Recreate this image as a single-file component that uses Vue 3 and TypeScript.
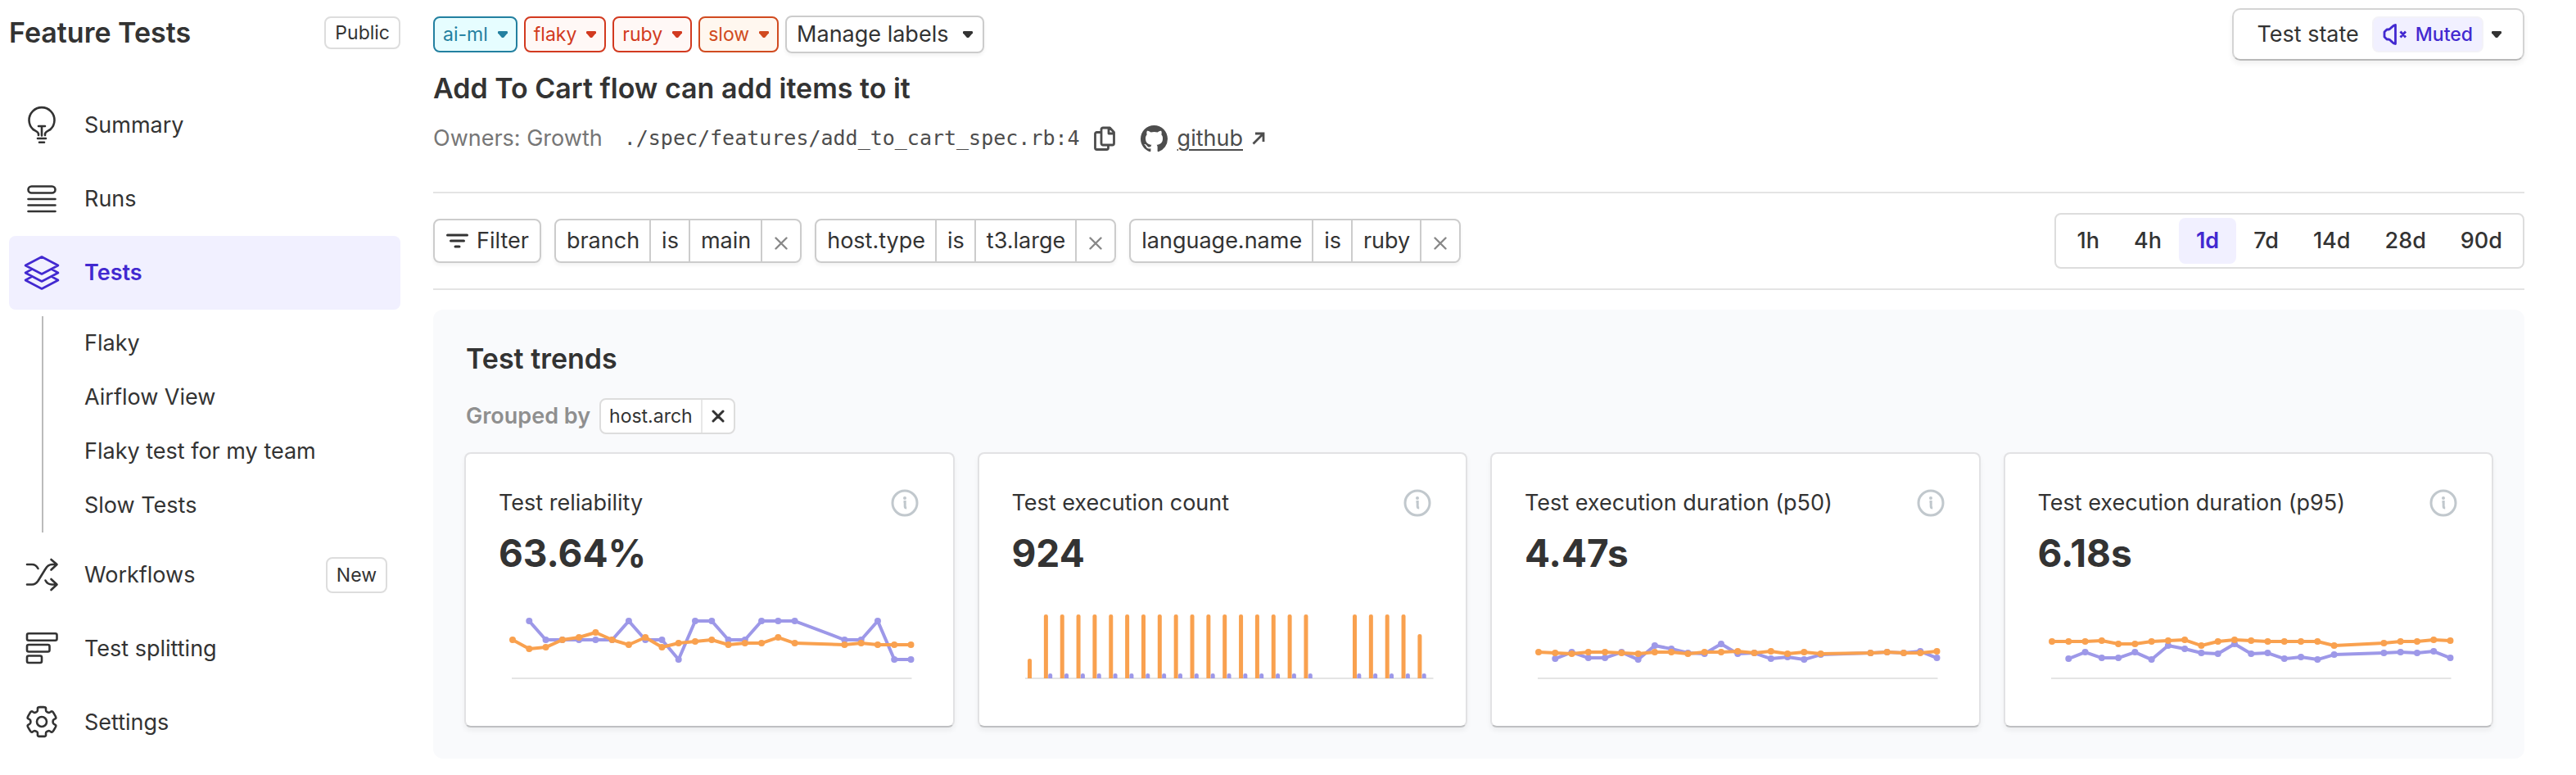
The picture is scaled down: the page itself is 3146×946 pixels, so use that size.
<script setup lang="ts">
import { ref } from 'vue'

type Point = [slot: number, y: number]
interface Series { tone: 'violet' | 'orange'; points: Point[] }
interface Metric { title: string; value: string; series?: Series[]; bars?: boolean }

const subItems = ['Flaky', 'Airflow View', 'Flaky test for my team', 'Slow Tests']

const labels = [
  { name: 'ai-ml', tone: 'teal' },
  { name: 'flaky', tone: 'red' },
  { name: 'ruby', tone: 'red' },
  { name: 'slow', tone: 'amber' },
]

const filters = [
  { key: 'branch', op: 'is', value: 'main' },
  { key: 'host.type', op: 'is', value: 't3.large' },
  { key: 'language.name', op: 'is', value: 'ruby' },
]

const ranges = ['1h', '4h', '1d', '7d', '14d', '28d', '90d']
const activeRange = ref('1d')

// Hourly slots; 18 and 19 hold no data.
const slots = [0, 1, 2, 3, 4, 5, 6, 7, 8, 9, 10, 11, 12, 13, 14, 15, 16, 17, 20, 21, 22, 23, 24]
const plot = (ys: number[], from = 0): Point[] => ys.map((y, i) => [slots[i + from], y])

const slowDurations = plot(
  [64, 56, 63, 63, 56, 65, 48, 52, 57, 58, 46, 58, 57, 64, 62, 65, 59, 57, 56, 57, 55, 63], 1)

const metrics: Metric[] = [
  {
    title: 'Test reliability',
    value: '63.64%',
    series: [
      { tone: 'violet', points: plot([18, 41, 41, 41, 41, 41, 18, 41, 41, 65, 18, 18, 41, 41, 18, 18, 18, 41, 41, 18, 65, 65], 1) },
      { tone: 'orange', points: plot([41, 52, 50, 41, 38, 32, 41, 47, 38, 50, 45, 43, 41, 47, 45, 45, 38, 45, 47, 45, 47, 47, 47]) },
    ],
  },
  { title: 'Test execution count', value: '924', bars: true },
  {
    title: 'Test execution duration (p50)',
    value: '4.47s',
    series: [
      { tone: 'violet', points: slowDurations },
      { tone: 'orange', points: plot([56, 57, 58, 56, 56, 57, 58, 56, 56, 58, 56, 56, 55, 57, 55, 58, 56, 58, 57, 56, 57, 57, 55]) },
    ],
  },
  {
    title: 'Test execution duration (p95)',
    value: '6.18s',
    series: [
      { tone: 'violet', points: slowDurations },
      { tone: 'orange', points: plot([43, 43, 43, 42, 46, 46, 43, 42, 41, 48, 43, 41, 42, 43, 43, 43, 43, 48, 45, 43, 43, 41, 42]) },
    ],
  },
]

const px = (slot: number) => 17 + slot * 20.25
const toPath = (points: Point[]) => points.map(([s, y]) => `${px(s)},${y}`).join(' ')

const barX = (slot: number) => 19 + slot * 19.83
const barTop = (slot: number) => (slot === 0 ? 64 : slot === 24 ? 34 : 10)

// Six-toothed gear outline with softened corners.
function gearPath(cx: number, cy: number): string {
  const pts: [number, number][] = []
  for (let t = 0; t < 6; t++) {
    const corners: [number, number][] = [[-21, 13.8], [-16, 18.6], [16, 18.6], [21, 13.8]]
    for (const [deg, r] of corners) {
      const a = ((t * 60 + deg - 90) * Math.PI) / 180
      pts.push([cx + r * Math.cos(a), cy + r * Math.sin(a)])
    }
  }
  const lerp = (p: number[], q: number[], k: number) =>
    `${(p[0] + (q[0] - p[0]) * k).toFixed(2)} ${(p[1] + (q[1] - p[1]) * k).toFixed(2)}`
  return pts.map((p, i) => {
    const prev = pts[(i + pts.length - 1) % pts.length]
    const next = pts[(i + 1) % pts.length]
    return `${i ? 'L' : 'M'}${lerp(p, prev, 0.3)}Q${p[0].toFixed(2)} ${p[1].toFixed(2)} ${lerp(p, next, 0.3)}`
  }).join('') + 'Z'
}
const gear = gearPath(24, 23)
</script>

<template>
  <div class="page">
    <aside class="sidebar">
      <header class="suite">
        <h2>Feature Tests</h2>
        <span class="badge">Public</span>
      </header>

      <nav aria-label="Suite">
        <a class="nav-item" href="#summary">
          <svg class="nav-icon" viewBox="0 0 48 48" aria-hidden="true">
            <path d="M20 36v-1.500c0-2.500-3-3.500-6.500-5.500A15.500 15.500 0 1 1 34.500 29c-3.500 2-6.500 3-6.500 5.500V36M20 25h8M24 25v11.500M19 40h10M21 44.700h6" />
          </svg>
          Summary
        </a>
        <a class="nav-item" href="#runs">
          <svg class="nav-icon" viewBox="0 0 48 48" aria-hidden="true">
            <rect x="7.5" y="8.500" width="33" height="8" rx="4" />
            <path d="M7.500 24h33M7.500 31.500h33M7.500 39h33" />
          </svg>
          Runs
        </a>
        <a class="nav-item active" href="#tests" aria-current="page">
          <svg class="nav-icon" viewBox="0 0 48 48" aria-hidden="true">
            <path d="M24 4.500 44 15 24 25.500 4 15ZM12 19.700 4 24l20 10.500L44 24l-8-4.300M12 28.700 4 33l20 10.500L44 33l-8-4.300" />
          </svg>
          Tests
        </a>
        <ul class="sub-nav">
          <li v-for="item in subItems" :key="item"><a href="#views">{{ item }}</a></li>
        </ul>
        <a class="nav-item" href="#workflows">
          <svg class="nav-icon" viewBox="0 0 48 48" aria-hidden="true">
            <path d="M6 11h6c3.500 0 6 2 7.500 5M6 35.500h6c3.500 0 5.500-1.500 7.500-4.500l9-14.500c2-3.500 4.500-5.500 8-5.500H42M35.500 5l7 6-7 6.500M28.500 30.500c1.500 3 4 5 8 5H42M35.500 29l7 6.500-7 6.500" />
          </svg>
          Workflows
          <span class="badge tall">New</span>
        </a>
        <a class="nav-item" href="#splitting">
          <svg class="nav-icon" viewBox="0 0 48 48" aria-hidden="true">
            <rect x="6" y="5.300" width="36.500" height="8.500" rx="2" />
            <rect x="6" y="19" width="27.500" height="8.500" rx="2" />
            <rect x="6" y="32.500" width="18" height="8.500" rx="2" />
          </svg>
          Test splitting
        </a>
        <a class="nav-item" href="#settings">
          <svg class="nav-icon" viewBox="0 0 48 48" aria-hidden="true">
            <path :d="gear" />
            <circle cx="24" cy="23" r="6" />
          </svg>
          Settings
        </a>
      </nav>
    </aside>

    <main class="main">
      <header class="head">
        <div>
          <div class="labels">
            <button v-for="l in labels" :key="l.name" type="button" class="label" :class="l.tone">
              {{ l.name }}
              <svg class="caret" viewBox="0 0 12 8" aria-hidden="true"><path d="M1.300 0h9.400Q12 0 12 1.300v1L7.500 7.400Q6 8.700 4.500 7.400L0 2.300v-1Q0 0 1.300 0Z" /></svg>
            </button>
            <button type="button" class="manage">
              Manage labels
              <svg class="caret" viewBox="0 0 12 8" aria-hidden="true"><path d="M1.300 0h9.400Q12 0 12 1.300v1L7.500 7.400Q6 8.700 4.500 7.400L0 2.300v-1Q0 0 1.300 0Z" /></svg>
            </button>
          </div>
          <h1>Add To Cart flow can add items to it</h1>
          <div class="meta">
            <span class="owners">Owners: Growth</span>
            <code>./spec/features/add_to_cart_spec.rb:4</code>
            <button type="button" class="copy" aria-label="Copy path">
              <svg viewBox="0 0 26 30" aria-hidden="true">
                <path d="M11 2h8.500L24.500 7.500V21a2 2 0 0 1-2 2H11a2 2 0 0 1-2-2V4a2 2 0 0 1 2-2ZM18 2.500V9h6.500M8 7.500H3.500a2 2 0 0 0-2 2v17a2 2 0 0 0 2 2h12a2 2 0 0 0 2-2V24" />
              </svg>
            </button>
            <svg class="github" viewBox="0 0 16 16" aria-hidden="true">
              <path d="M8 0C3.580 0 0 3.580 0 8c0 3.540 2.290 6.530 5.470 7.590.4.070.55-.17.55-.38 0-.19-.01-.82-.01-1.490-2.010.37-2.530-.49-2.690-.94-.09-.23-.48-.94-.82-1.130-.28-.15-.68-.52-.01-.53.63-.01 1.080.58 1.230.82.72 1.210 1.870.87 2.330.66.07-.52.28-.87.51-1.070-1.780-.2-3.640-.89-3.640-3.950 0-.87.31-1.590.82-2.150-.08-.2-.36-1.020.08-2.120 0 0 .67-.21 2.200.82.64-.18 1.320-.27 2-.27s1.360.09 2 .27c1.530-1.040 2.200-.82 2.200-.82.44 1.100.16 1.920.08 2.120.51.56.82 1.270.82 2.150 0 3.070-1.870 3.750-3.650 3.950.29.25.54.73.54 1.480 0 1.070-.01 1.930-.01 2.200 0 .21.15.46.55.38A8.010 8.010 0 0 0 16 8c0-4.420-3.580-8-8-8Z" />
            </svg>
            <a href="#github">github</a>
            <svg class="out" viewBox="0 0 16 16" aria-hidden="true"><path d="M1.500 14.500 14 2M4 2h10v10" /></svg>
          </div>
        </div>

        <button type="button" class="state">
          Test state
          <span class="muted">
            <svg viewBox="0 0 30 26" aria-hidden="true">
              <path d="M7 7H5L2 10v6l3 3h2c3 0 4.500 5.500 8.500 5.500V1.500C11.500 1.500 10 7 7 7ZM21.500 9.500l6.500 7M28 9.500l-6.500 7" />
            </svg>
            Muted
          </span>
          <svg class="caret" viewBox="0 0 12 8" aria-hidden="true"><path d="M1.300 0h9.400Q12 0 12 1.300v1L7.500 7.400Q6 8.700 4.500 7.400L0 2.300v-1Q0 0 1.300 0Z" /></svg>
        </button>
      </header>

      <section class="toolbar" aria-label="Filters">
        <button type="button" class="filter">
          <svg viewBox="0 0 27 18" aria-hidden="true"><path d="M1.500 2h24M5.500 9h16M11 16h5" /></svg>
          Filter
        </button>
        <div v-for="f in filters" :key="f.key" class="chip">
          <button type="button">{{ f.key }}</button>
          <button type="button">{{ f.op }}</button>
          <button type="button">{{ f.value }}</button>
          <button type="button" class="close" :aria-label="`Remove ${f.key}`">
            <svg viewBox="0 0 16 16" aria-hidden="true"><path d="M1.500 1.500l13 13M14.500 1.500l-13 13" /></svg>
          </button>
        </div>
        <div class="ranges" role="group" aria-label="Period">
          <button
            v-for="r in ranges" :key="r" type="button"
            :class="{ on: r === activeRange }" :aria-pressed="r === activeRange"
            @click="activeRange = r"
          >{{ r }}</button>
        </div>
      </section>

      <section class="panel">
        <h2>Test trends</h2>
        <div class="grouped">
          <span>Grouped by</span>
          <div class="tag">
            <span>host.arch</span>
            <button type="button" aria-label="Remove host.arch">
              <svg viewBox="0 0 16 16" aria-hidden="true"><path d="M2 2l12 12M14 2 2 14" /></svg>
            </button>
          </div>
        </div>

        <div class="cards">
          <article v-for="m in metrics" :key="m.title" class="card">
            <div class="card-head">
              <h3>{{ m.title }}</h3>
              <button type="button" class="info" :aria-label="`About ${m.title}`">
                <svg viewBox="0 0 34 34" aria-hidden="true">
                  <circle class="ring" cx="17" cy="17" r="15" />
                  <circle class="dot" cx="17" cy="11" r="2" />
                  <path d="M15.500 15.500h1.700v5.500q0 2 2 2" />
                </svg>
              </button>
            </div>
            <p class="value">{{ m.value }}</p>
            <svg class="chart" viewBox="0 0 514 100" role="img" :aria-label="m.title">
              <line v-if="!m.bars" class="axis" x1="16" x2="504" y1="88" y2="88" />
              <line v-else class="axis" x1="16" x2="514" y1="88" y2="88" />
              <g v-for="s in m.series" :key="s.tone" :class="s.tone">
                <polyline :points="toPath(s.points)" />
                <circle v-for="[slot, y] in s.points" :key="slot" :cx="px(slot)" :cy="y" r="4" />
              </g>
              <template v-if="m.bars">
                <g v-for="s in slots" :key="s">
                  <path class="orange-bar" :d="`M${barX(s)} 88V${barTop(s) + 2}q0-2 2.500-2t2.500 2V88Z`" />
                  <path v-if="s" class="violet-bar" :d="`M${barX(s) + 5.300} 88v-4q0-2 2.500-2t2.500 2v4Z`" />
                </g>
              </template>
            </svg>
          </article>
        </div>
      </section>
    </main>
  </div>
</template>

<style>
body {
  background: #fff;
}
</style>

<style scoped>
.page {
  display: flex;
  gap: 40px;
  padding-right: 63px;
  color: #333;
  font: 400 27px/36px Inter, "Liberation Sans", sans-serif;
}
.page * {
  box-sizing: border-box;
}
h1, h2, h3, p, ul {
  margin: 0;
  padding: 0;
  font-weight: 400;
}
button {
  margin: 0;
  padding: 0;
  border: 0;
  background: none;
  color: inherit;
  font: inherit;
  white-space: nowrap;
}
a {
  color: inherit;
}
svg {
  display: block;
  flex: none;
}

.sidebar {
  flex: none;
  width: 489px;
  padding-left: 11px;
}
.suite {
  display: flex;
  align-items: center;
  justify-content: space-between;
  height: 80px;
  margin-bottom: 28px;
}
h1, h2 {
  font-size: 34px;
  line-height: 44px;
  font-weight: 600;
}
.badge {
  padding: 0 11px;
  border: 2px solid #ddd;
  border-radius: 8px;
  background: #fff;
  font-size: 23px;
  line-height: 36px;
}
.badge.tall {
  margin: 0 16px 0 auto;
  line-height: 40px;
}
.nav-item {
  display: flex;
  align-items: center;
  gap: 28px;
  height: 90px;
  padding-left: 16px;
  border-radius: 8px;
  text-decoration: none;
}
.nav-item.active {
  background: #f1f0ff;
  color: #4229d0;
  font-weight: 600;
}
.nav-icon {
  width: 48px;
  height: 48px;
  fill: none;
  stroke: currentColor;
  stroke-width: 2.6;
  stroke-linecap: round;
  stroke-linejoin: round;
}
.sub-nav {
  margin: 8px 0 7px 40px;
  padding-left: 50px;
  border-left: 2px solid #bbb;
  list-style: none;
}
.sub-nav li {
  line-height: 66px;
}
.sub-nav a {
  text-decoration: none;
}

.main {
  flex: 1;
  min-width: 0;
}
.head {
  display: flex;
  align-items: flex-start;
  justify-content: space-between;
  height: 236px;
  padding-top: 10px;
  border-bottom: 2px solid #e4e4e4;
}
.labels {
  display: flex;
  align-items: center;
  gap: 8px;
  padding-top: 9px;
}
.caret {
  width: 12px;
  height: 8px;
  fill: currentColor;
}
.label {
  display: flex;
  align-items: center;
  gap: 12px;
  height: 44px;
  padding: 0 10px;
  border: 2px solid currentColor;
  border-radius: 8px;
  font-size: 23px;
}
.teal {
  background: #e6fdff;
  color: #2380a0;
}
.red {
  background: #fff8f6;
  color: #d23a20;
}
.amber {
  background: #fff7ef;
  color: #d14b20;
}
.manage {
  display: flex;
  align-items: center;
  gap: 18px;
  height: 46px;
  padding: 0 12px;
  border: 2px solid #ccc;
  border-radius: 8px;
  box-shadow: 0 3px 4px rgba(0, 0, 0, 0.05);
}
h1 {
  margin-top: 21px;
}
.meta {
  display: flex;
  align-items: center;
  margin-top: 21px;
  color: #4d4d4d;
}
.owners {
  margin-right: 26px;
  color: #767676;
}
code {
  font: 25px/36px "DejaVu Sans Mono", "Liberation Mono", monospace;
}
.copy {
  margin: 0 31px 0 17px;
}
.copy svg {
  width: 26px;
  height: 30px;
  fill: none;
  stroke: currentColor;
  stroke-width: 2.8;
  stroke-linejoin: round;
}
.github {
  width: 33px;
  height: 33px;
  margin-right: 12px;
  fill: currentColor;
}
.meta a {
  text-decoration-thickness: 2px;
  text-underline-offset: 4px;
}
.out {
  width: 16px;
  height: 16px;
  margin-left: 11px;
  fill: none;
  stroke: currentColor;
  stroke-width: 2.8;
}
.state {
  display: flex;
  align-items: center;
  height: 64px;
  padding: 0 26px 0 28px;
  border: 2px solid #d4d4d4;
  border-bottom-color: #b8b8b8;
  border-radius: 10px;
  box-shadow: 0 4px 6px rgba(0, 0, 0, 0.06);
}
.muted {
  display: flex;
  align-items: center;
  gap: 10px;
  height: 44px;
  margin: 0 10px 0 16px;
  padding: 0 11px;
  border: 2px solid #f3f2f8;
  border-radius: 8px;
  background: #f1f0ff;
  color: #4229d0;
  font-size: 23px;
  font-weight: 500;
}
.muted svg {
  width: 30px;
  height: 26px;
  fill: none;
  stroke: currentColor;
  stroke-width: 2.8;
  stroke-linejoin: round;
}

.toolbar {
  display: flex;
  align-items: center;
  gap: 16px;
  height: 118px;
  border-bottom: 2px solid #e4e4e4;
}
.filter,
.chip {
  display: flex;
  height: 54px;
  border: 2px solid #ccc;
  border-radius: 8px;
  box-shadow: 0 3px 4px rgba(0, 0, 0, 0.05);
}
.filter {
  align-items: center;
  gap: 10px;
  padding: 0 13px 0 14px;
}
.filter svg {
  width: 27px;
  height: 18px;
  fill: none;
  stroke: currentColor;
  stroke-width: 3;
  stroke-linecap: round;
}
.chip button {
  padding: 0 12px 0 13px;
}
.chip button + button {
  border-left: 2px solid #ccc;
}
.chip .close {
  display: flex;
  align-items: center;
  padding: 6px 15px 0;
  color: #888;
}
.close svg,
.tag svg {
  width: 16px;
  height: 16px;
  fill: none;
  stroke: currentColor;
  stroke-width: 2.4;
  stroke-linecap: round;
}
.ranges {
  display: flex;
  height: 68px;
  margin-left: auto;
  padding: 4px;
  border: 2px solid #ddd;
  border-radius: 8px;
}
.ranges button {
  padding: 0 21px;
  border-radius: 8px;
  font-weight: 500;
}
.ranges .on {
  background: #f1f0ff;
  color: #4229d0;
  font-weight: 600;
}

.panel {
  margin-top: 24px;
  padding: 38px;
  border-radius: 12px;
  background: #f9fafc;
}
.grouped {
  display: flex;
  align-items: center;
  gap: 11px;
  margin: 26px 0 22px;
  color: #8f8f8f;
  font-weight: 600;
}
.panel h2,
.grouped {
  padding-left: 2px;
}
.tag {
  display: flex;
  height: 44px;
  border: 2px solid #ddd;
  border-radius: 8px;
  background: #fff;
  color: #333;
  font-size: 23px;
  font-weight: 400;
  line-height: 40px;
}
.tag span {
  padding: 0 10px;
}
.tag button {
  padding: 0 11px;
  border-left: 2px solid #e8e8e8;
}
.tag svg {
  stroke-width: 3;
}
.cards {
  display: grid;
  grid-template-columns: repeat(4, 1fr);
  gap: 28px;
}
.card {
  padding: 42px 40px 46px;
  border: 2px solid #e2e2e4;
  border-bottom-color: #bfc0c2;
  border-radius: 8px;
  background: #fff;
  box-shadow: 0 4px 6px rgba(0, 0, 0, 0.05);
}
.card-head {
  display: flex;
  align-items: center;
  justify-content: space-between;
}
h3 {
  font-size: 27px;
  line-height: 36px;
}
.info {
  margin-right: 2px;
}
.info svg {
  width: 34px;
  height: 34px;
  fill: none;
  stroke: #c1c8cd;
  stroke-width: 3;
}
.info .dot {
  fill: #c1c8cd;
  stroke: none;
}
.value {
  margin: 12px 0 34px;
  font-size: 46px;
  line-height: 62px;
  font-weight: 700;
}
.chart {
  width: 100%;
  overflow: visible;
}
.axis {
  stroke: #e4e4e4;
  stroke-width: 2;
}
polyline {
  fill: none;
  stroke-width: 4;
  stroke-linejoin: round;
}
.violet polyline {
  stroke: #9d98e8;
}
.violet circle,
.violet-bar {
  fill: #9d98e8;
}
.orange polyline {
  stroke: #f9a14f;
}
.orange circle,
.orange-bar {
  fill: #f9a14f;
}
</style>
